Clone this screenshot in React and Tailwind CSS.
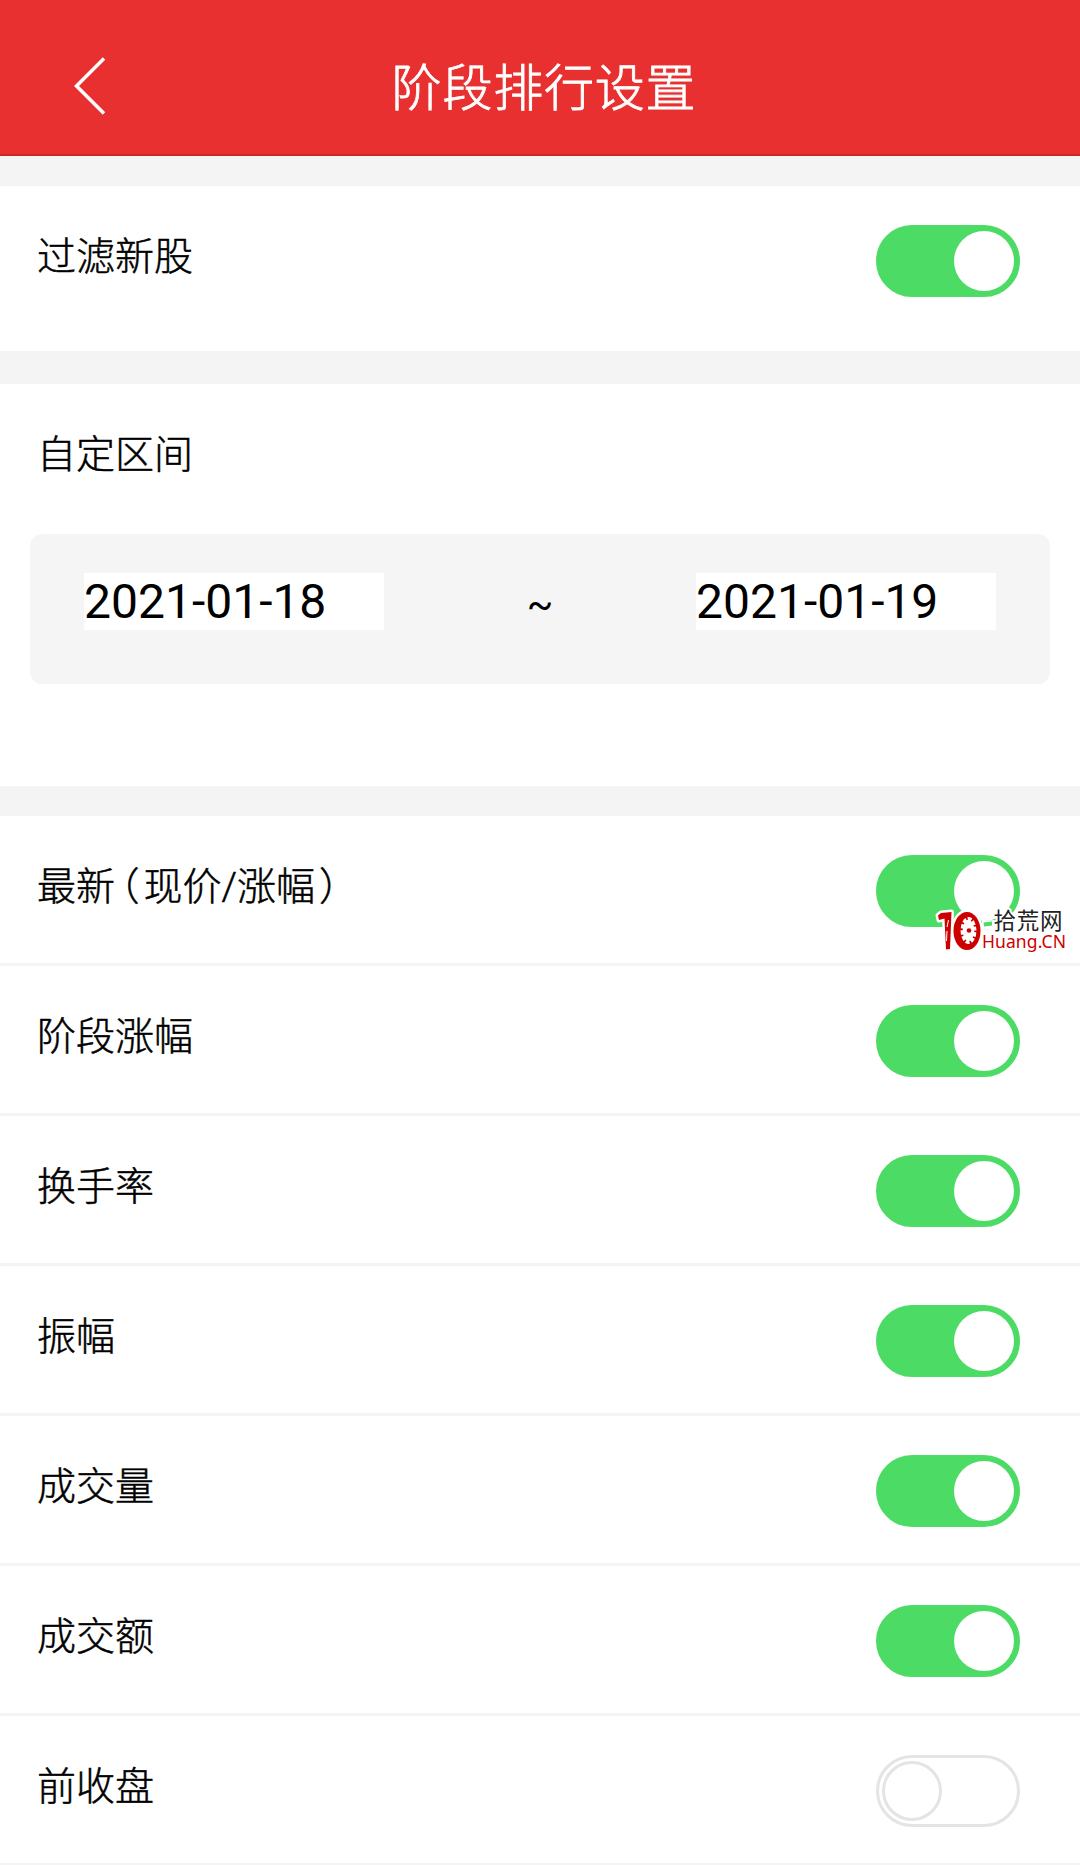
import { useState } from "react";

const COLUMNS = [
  { id: "latest", label: "最新（现价/涨幅）", on: true },
  { id: "stageChange", label: "阶段涨幅", on: true },
  { id: "turnover", label: "换手率", on: true },
  { id: "amplitude", label: "振幅", on: true },
  { id: "volume", label: "成交量", on: true },
  { id: "amount", label: "成交额", on: true },
  { id: "prevClose", label: "前收盘", on: false },
];

const Switch = ({ checked, onChange, label }) => (
  <button
    type="button"
    role="switch"
    aria-checked={checked}
    aria-label={label}
    onClick={onChange}
    className={`flex h-[72px] w-36 shrink-0 items-center rounded-full border-[3px] px-[3px] ${
      checked
        ? "justify-end border-[#4cdb64] bg-[#4cdb64]"
        : "justify-start border-[#e4e4e4] bg-white"
    }`}
  >
    <span
      className={`size-[60px] rounded-full bg-white ${
        checked ? "" : "border-[3px] border-[#e4e4e4]"
      }`}
    />
  </button>
);

// full-width brackets are set at half width, with a little air before them
const Label = ({ text }) => (
  <span className="text-[39px] leading-[60px] font-light whitespace-nowrap [-webkit-text-stroke:0.5px_#000]">
    {text.split(/([（）])/).map((part, i) => {
      if (part === "（") {
        return (
          <span
            key={i}
            className="mr-1 ml-[5px] [font-feature-settings:'halt']"
          >
            {part}
          </span>
        );
      }
      if (part === "）") {
        return (
          <span key={i} className="ml-1 [font-feature-settings:'halt']">
            {part}
          </span>
        );
      }
      return part;
    })}
  </span>
);

const SettingRow = ({ label, checked, onChange, className }) => (
  <div
    className={`flex items-start justify-between pr-[60px] pl-[37px] ${className}`}
  >
    <div className="pt-[41px]">
      <Label text={label} />
    </div>
    <div className="pt-[39px]">
      <Switch checked={checked} onChange={onChange} label={label} />
    </div>
  </div>
);

const Watermark = () => (
  <svg
    className="pointer-events-none absolute top-[900px] left-[932px]"
    width="142"
    height="56"
    viewBox="0 -6 142 56"
  >
    <g stroke="#fff" strokeWidth="5" strokeLinejoin="round">
      <path
        d="M6 9.500 L9 7 L19.500 6 L18 43 L14 43.500 L12.500 12.500 L7 14 Z"
        fill="#c00"
        style={{ paintOrder: "stroke" }}
      />
      <ellipse
        cx="35"
        cy="25"
        rx="13.500"
        ry="19"
        fill="#c00"
        style={{ paintOrder: "stroke" }}
      />
    </g>
    <path d="M16.500 14 L15 21 M15 25 L14.500 35" stroke="#fff" strokeWidth="1" />
    <ellipse cx="36.500" cy="24.500" rx="8" ry="13.500" fill="#fff" />
    <ellipse
      cx="36.500"
      cy="24.500"
      rx="7.500"
      ry="12.500"
      fill="none"
      stroke="#c00"
      strokeWidth="3.500"
      strokeDasharray="1.800 4.600"
    />
    <circle cx="37" cy="24.500" r="2.300" fill="#c00" />
    <path d="M50 15 L62 14 L62 23 L50 23 Z" fill="#fff" />
    <path d="M51.500 16.500 L60 15.500 L60 19.500 L52 20.500 Z" fill="#4cdb64" />
    <text
      x="50"
      y="42"
      fontSize="17.500"
      fill="#c00"
      stroke="#fff"
      strokeWidth="3"
      strokeLinejoin="round"
      style={{ paintOrder: "stroke" }}
      className="font-['Noto_Sans',sans-serif]"
      textLength="84"
    >
      Huang.CN
    </text>
    <text
      x="61.500"
      y="23"
      fontSize="22.500"
      fill="#222"
      stroke="#fff"
      strokeWidth="4"
      strokeLinejoin="round"
      style={{ paintOrder: "stroke" }}
      className="font-['Noto_Sans_CJK_SC',sans-serif] font-normal"
      textLength="69"
    >
      拾荒网
    </text>
  </svg>
);

const DateField = ({ value, onChange }) => (
  <input
    type="text"
    value={value}
    onChange={(e) => onChange(e.target.value)}
    className="h-[57px] w-[300px] bg-white text-[48px] leading-[57px] text-black outline-none"
  />
);

const App = () => {
  const [filterNew, setFilterNew] = useState(true);
  const [range, setRange] = useState({ from: "2021-01-18", to: "2021-01-19" });
  const [columns, setColumns] = useState(COLUMNS);

  const toggleColumn = (id) => {
    setColumns(columns.map((c) => (c.id === id ? { ...c, on: !c.on } : c)));
  };

  return (
    <div className="relative h-[1865px] w-[1080px] overflow-hidden bg-[#f4f4f4] font-[Roboto,'Noto_Sans_CJK_SC',sans-serif] text-black">
      <header className="grid h-[156px] grid-cols-[1fr_auto_1fr] items-center border-b-2 border-[#c92828] bg-[#e93030] text-white">
        <button type="button" aria-label="返回" className="ml-[72px] mt-[18px] w-9">
          <svg width="36" height="60" viewBox="0 0 36 60" fill="none">
            <path d="M32 2.500 L4.500 30 L32 57.500" stroke="#fff" strokeWidth="3.500" />
          </svg>
        </button>
        <h1 className="pt-6 pl-2 text-[50px] leading-[72px] font-light tracking-[0.8px] [-webkit-text-stroke:0.8px_#fff]">
          阶段排行设置
        </h1>
      </header>

      <section className="mt-[30px] bg-white">
        <SettingRow
          label="过滤新股"
          checked={filterNew}
          onChange={() => setFilterNew(!filterNew)}
          className="h-[165px]"
        />
      </section>

      <section className="mt-[33px] h-[402px] bg-white px-[30px] pt-[41px]">
        <h2 className="pl-[7px]">
          <Label text="自定区间" />
        </h2>
        <div className="mt-[49px] flex h-[150px] justify-between rounded-xl bg-[#f5f5f5] px-[54px] pt-[39px]">
          <DateField
            value={range.from}
            onChange={(from) => setRange({ ...range, from })}
          />
          <span className="pt-1 text-[39px] leading-[57px]">~</span>
          <DateField
            value={range.to}
            onChange={(to) => setRange({ ...range, to })}
          />
        </div>
      </section>

      <section className="mt-[30px] bg-white">
        {columns.map((column) => (
          <SettingRow
            key={column.id}
            label={column.label}
            checked={column.on}
            onChange={() => toggleColumn(column.id)}
            className="h-[150px] border-b-[3px] border-[#f4f4f4]"
          />
        ))}
      </section>

      <Watermark />
    </div>
  );
};

export default App;
